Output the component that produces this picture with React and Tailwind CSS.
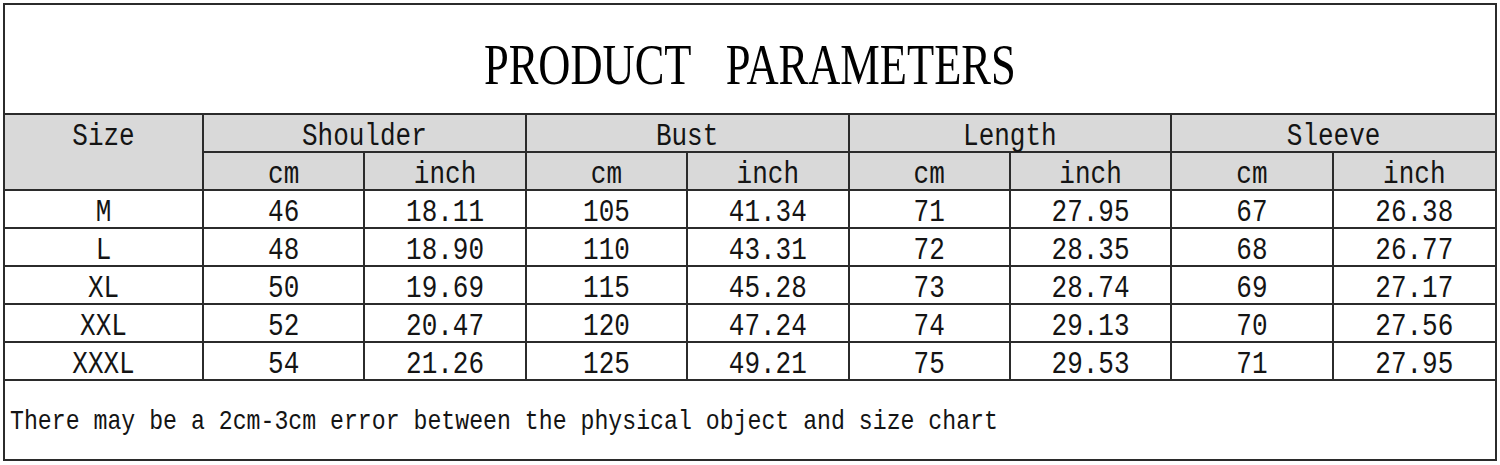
const GROUPS = ['Shoulder', 'Bust', 'Length', 'Sleeve'];

const ROWS = [
  ['M', '46', '18.11', '105', '41.34', '71', '27.95', '67', '26.38'],
  ['L', '48', '18.90', '110', '43.31', '72', '28.35', '68', '26.77'],
  ['XL', '50', '19.69', '115', '45.28', '73', '28.74', '69', '27.17'],
  ['XXL', '52', '20.47', '120', '47.24', '74', '29.13', '70', '27.56'],
  ['XXXL', '54', '21.26', '125', '49.21', '75', '29.53', '71', '27.95'],
];

const line = 'border-[#2b2b2b]';

function Txt({ children, className = '' }) {
  return <span className={`inline-block scale-y-[1.2] ${className}`}>{children}</span>;
}

function Cell({ children, last, className = '' }) {
  return (
    <div className={`flex items-center justify-center pt-[7px] border-b-2 ${last ? '' : 'border-r-2'} ${line} ${className}`}>
      <Txt>{children}</Txt>
    </div>
  );
}

export default function App() {
  return (
    <div className="w-[1500px] h-[465px] bg-white pt-[3px] pl-[3px]">
      <div className={`w-[1494px] h-[458px] border-2 ${line} flex flex-col text-[#141414] font-['Liberation_Mono',monospace] text-[26px] leading-none`}>
        <div className={`h-[110px] shrink-0 border-b-2 ${line} flex items-center justify-center pt-[10px]`}>
          <div className="flex scale-x-[0.78] font-['Liberation_Serif',serif] text-[57px] leading-none text-black">
            <span>PRODUCT</span>
            <span className="ml-[44px]">PARAMETERS</span>
          </div>
        </div>

        <div className="grid grid-cols-[199px_repeat(8,minmax(0,1fr))] auto-rows-[38px] shrink-0">
          <div className={`row-span-2 bg-[#d9d9d9] border-b-2 border-r-2 ${line} flex justify-center`}>
            <div className="h-[36px] flex items-center pt-[7px]">
              <Txt>Size</Txt>
            </div>
          </div>
          {GROUPS.map((g, i) => (
            <Cell key={g} last={i === GROUPS.length - 1} className="col-span-2 bg-[#d9d9d9]">
              {g}
            </Cell>
          ))}
          {GROUPS.flatMap((g, i) => [
            <Cell key={g + 'cm'} className="bg-[#d9d9d9]">cm</Cell>,
            <Cell key={g + 'in'} last={i === GROUPS.length - 1} className="bg-[#d9d9d9]">inch</Cell>,
          ])}
          {ROWS.flatMap(row =>
            row.map((v, j) => (
              <Cell key={row[0] + j} last={j === row.length - 1}>{v}</Cell>
            ))
          )}
        </div>

        <div className="flex-1 flex items-center pl-[5px] pt-[6px] text-[23.2px]">
          <Txt>There may be a 2cm-3cm error between the physical object and size chart</Txt>
        </div>
      </div>
    </div>
  );
}
